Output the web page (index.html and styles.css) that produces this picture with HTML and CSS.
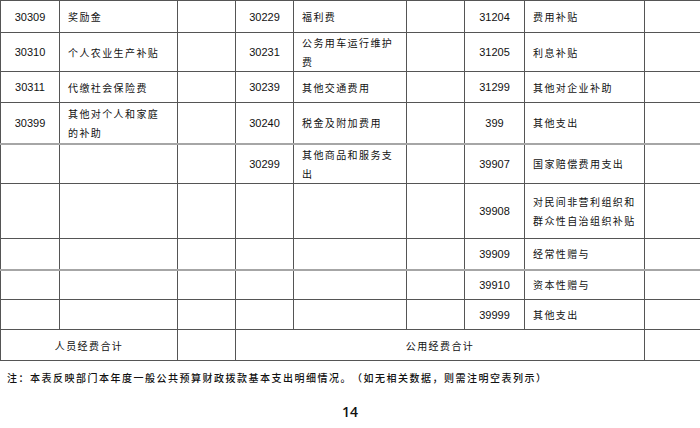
FILE: index.html
```html
<!DOCTYPE html>
<html lang="zh-CN">
<head>
<meta charset="utf-8">
<title>基本支出明细</title>
<link rel="stylesheet" href="styles.css">
</head>
<body>
<table class="grid">
  <colgroup>
    <col class="w59"><col class="w118"><col class="w58"><col class="w58"><col class="w113"><col class="w58"><col class="w60"><col class="w120"><col class="w56">
  </colgroup>
  <tbody>
    <tr class="h32">
      <td class="code">30309</td><td class="txt">奖励金</td><td></td>
      <td class="code">30229</td><td class="txt">福利费</td><td></td>
      <td class="code">31204</td><td class="txt">费用补贴</td><td></td>
    </tr>
    <tr class="h39">
      <td class="code">30310</td><td class="txt">个人农业生产补贴</td><td></td>
      <td class="code">30231</td><td class="txt">公务用车运行维护<br>费</td><td></td>
      <td class="code">31205</td><td class="txt">利息补贴</td><td></td>
    </tr>
    <tr class="h31">
      <td class="code">30311</td><td class="txt">代缴社会保险费</td><td></td>
      <td class="code">30239</td><td class="txt">其他交通费用</td><td></td>
      <td class="code">31299</td><td class="txt">其他对企业补助</td><td></td>
    </tr>
    <tr class="h41">
      <td class="code">30399</td><td class="txt">其他对个人和家庭<br>的补助</td><td></td>
      <td class="code">30240</td><td class="txt">税金及附加费用</td><td></td>
      <td class="code">399</td><td class="txt">其他支出</td><td></td>
    </tr>
    <tr class="h40 light-top">
      <td></td><td></td><td></td>
      <td class="code">30299</td><td class="txt">其他商品和服务支<br>出</td><td></td>
      <td class="code">39907</td><td class="txt">国家赔偿费用支出</td><td></td>
    </tr>
    <tr class="h55">
      <td></td><td></td><td></td>
      <td></td><td></td><td></td>
      <td class="code">39908</td><td class="txt">对民间非营利组织和<br>群众性自治组织补贴</td><td></td>
    </tr>
    <tr class="h31">
      <td></td><td></td><td></td>
      <td></td><td></td><td></td>
      <td class="code">39909</td><td class="txt">经常性赠与</td><td></td>
    </tr>
    <tr class="h30 light-top">
      <td></td><td></td><td></td>
      <td></td><td></td><td></td>
      <td class="code">39910</td><td class="txt">资本性赠与</td><td></td>
    </tr>
    <tr class="h30">
      <td></td><td></td><td></td>
      <td></td><td></td><td></td>
      <td class="code">39999</td><td class="txt">其他支出</td><td></td>
    </tr>
    <tr class="h31">
      <td class="sum" colspan="2">人员经费合计</td><td></td>
      <td class="sum" colspan="5">公用经费合计</td><td></td>
    </tr>
  </tbody>
</table>
<p class="note">注：本表反映部门本年度一般公共预算财政拨款基本支出明细情况。（如无相关数据，则需注明空表列示）</p>
<p class="page">14</p>
</body>
</html>
```
FILE: styles.css
```css
html, body {
  margin: 0;
  padding: 0;
  background: #fff;
  color: #111;
  width: 700px;
  text-spacing-trim: space-all;
}

.grid {
  width: 700px;
  table-layout: fixed;
  border-collapse: collapse;
  margin: 0;
}

.grid td {
  border: 1px solid #555;
  padding: 0;
  vertical-align: middle;
}

.w59 { width: 59px; }
.w118 { width: 118px; }
.w58 { width: 58px; }
.w113 { width: 113px; }
.w60 { width: 60px; }
.w120 { width: 120px; }
.w56 { width: 56px; }

.h30 { height: 30px; }
.h31 { height: 31px; }
.h32 { height: 32px; }
.h39 { height: 39px; }
.h40 { height: 40px; }
.h41 { height: 41px; }
.h55 { height: 55px; }

.light-top td {
  border-top: 2px solid #a6a6a6;
}

.code {
  text-align: center;
  font-family: "Liberation Sans", Arial, sans-serif;
  font-size: 11px;
  color: #111;
}

.txt {
  padding-left: 8px !important;
  font-family: "Noto Sans CJK SC", sans-serif;
  font-size: 10px;
  letter-spacing: 1.4px;
  line-height: 19px;
  color: #111;
  white-space: nowrap;
}

.sum {
  text-align: center;
  font-family: "Noto Sans CJK SC", sans-serif;
  font-size: 10px;
  letter-spacing: 1.4px;
  color: #111;
}

.note {
  margin: 10px 0 0 7px;
  font-family: "Noto Sans CJK SC", sans-serif;
  font-size: 10px;
  letter-spacing: 1.5px;
  line-height: 14px;
  color: #111;
  font-weight: 500;
  white-space: nowrap;
  text-spacing-trim: space-all;
}

.page {
  margin: 18px 0 0 0;
  text-align: center;
  font-family: "Open Sans", sans-serif;
  font-weight: 600;
  font-size: 14px;
  line-height: 18px;
  color: #111;
}
```
